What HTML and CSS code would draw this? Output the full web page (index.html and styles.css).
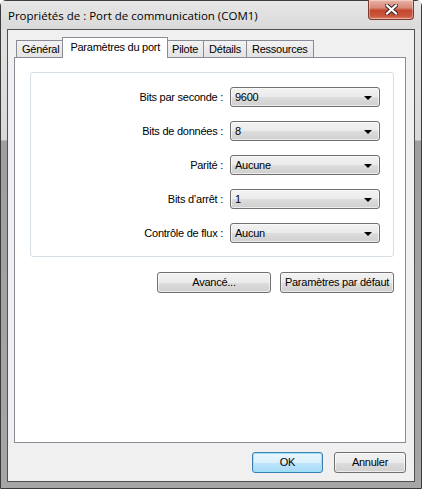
FILE: index.html
```html
<!DOCTYPE html>
<html lang="fr">
<head>
  <meta charset="UTF-8">
  <title>Propriétés de : Port de communication (COM1)</title>
  <link rel="stylesheet" href="styles.css">
</head>
<body>
  <div class="window">
    <div class="titlebar">
      <span class="title">Propriétés de : Port de communication (COM1)</span>
      <div class="close">
        <svg width="13" height="11" viewBox="0 0 13 11">
          <path d="M2 1.5 L11 9.5 M11 1.5 L2 9.5" stroke="#3b2b2b" stroke-width="4.2" stroke-linecap="square" fill="none"/>
          <path d="M2 1.5 L11 9.5 M11 1.5 L2 9.5" stroke="#ffffff" stroke-width="2.2" stroke-linecap="square" fill="none"/>
        </svg>
      </div>
    </div>

    <div class="client">
      <div class="tabs">
        <div class="tab">Général</div>
        <div class="tab active">Paramètres du port</div>
        <div class="tab">Pilote</div>
        <div class="tab">Détails</div>
        <div class="tab">Ressources</div>
      </div>

      <div class="panel">
        <div class="group">
          <label>Bits par seconde :</label>
          <div class="combo"><span>9600</span><i class="arrow"></i></div>

          <label>Bits de données :</label>
          <div class="combo"><span>8</span><i class="arrow"></i></div>

          <label>Parité :</label>
          <div class="combo"><span>Aucune</span><i class="arrow"></i></div>

          <label>Bits d’arrêt :</label>
          <div class="combo"><span>1</span><i class="arrow"></i></div>

          <label>Contrôle de flux :</label>
          <div class="combo"><span>Aucun</span><i class="arrow"></i></div>
        </div>

        <div class="actions">
          <div class="btn wide">Avancé...</div>
          <div class="btn wide">Paramètres par défaut</div>
        </div>
      </div>

      <div class="footer">
        <div class="btn default">OK</div>
        <div class="btn">Annuler</div>
      </div>
    </div>
  </div>
</body>
</html>
```

FILE: styles.css
```css
* {
  box-sizing: border-box;
}

body {
  margin: 0;
  background-color: #ffffff;
  font-family: "Liberation Sans", Arial, sans-serif;
  font-size: 11px;
  letter-spacing: -0.25px;
  color: #000000;
}

.window {
  width: 422px;
  height: 489px;
  display: flex;
  flex-direction: column;
  padding: 0 6px 6px 6px;
  border: 1px solid #3c3c3c;
  border-radius: 6px 6px 0 0;
  background: linear-gradient(to bottom, #e4e4e4 0, #d8d8d8 139px, #9f9f9f 140px, #a6a6a6 100%);
}

.titlebar {
  height: 28px;
  display: flex;
  align-items: flex-start;
  background: linear-gradient(to bottom, #e6e6e6, #dadada);
  margin: 0 -6px;
  padding: 0 1px 0 7px;
}

.title {
  font-family: "Open Sans", "Noto Sans", sans-serif;
  font-size: 11.5px;
  letter-spacing: 0;
  line-height: 16px;
  margin-top: 7px;
  color: #000000;
}

.close {
  margin-left: auto;
  margin-top: -1px;
  margin-right: 6px;
  width: 46px;
  height: 20px;
  display: flex;
  align-items: center;
  justify-content: center;
  border: 1px solid #7a3a32;
  border-top: none;
  border-radius: 0 0 4px 4px;
  background: linear-gradient(to bottom, #e9b3a5 0, #d88a78 40%, #c5472f 55%, #c9563c 85%, #e08a6e 100%);
  box-shadow: inset 0 0 0 1px rgba(255, 255, 255, 0.35);
}

.client {
  flex: 1;
  display: flex;
  flex-direction: column;
  border: 1px solid #505050;
  background-color: #f0f0f0;
  padding: 7px 8px 0 6px;
}

.tabs {
  height: 21px;
  display: flex;
  align-items: flex-end;
  padding-left: 2px;
  margin-bottom: -1px;
  position: relative;
  z-index: 1;
}

.tab {
  height: 17px;
  margin-bottom: 1px;
  margin-left: -1px;
  padding: 0 5px;
  line-height: 17px;
  border: 1px solid #898c95;
  border-bottom: none;
  background: linear-gradient(to bottom, #f2f2f2, #e3e3e3);
}

.tab:first-child {
  margin-left: 0;
}

.tab.active {
  height: 21px;
  margin: 0 -2px 0 -3px;
  padding: 0 7px;
  line-height: 18px;
  background: #ffffff;
  position: relative;
  z-index: 2;
}

.tab.active + .tab {
  margin-left: 0;
}

.panel {
  height: 386px;
  background-color: #ffffff;
  border: 1px solid #898c95;
  padding: 14px 11px 0 15px;
}

.group {
  height: 185px;
  display: grid;
  grid-template-columns: 194px 150px;
  grid-auto-rows: 20px;
  column-gap: 5px;
  row-gap: 14px;
  padding: 14px 0 0 0;
  border: 1px solid #d5dfe5;
  border-radius: 3px;
}

.group label {
  text-align: right;
  line-height: 20px;
  padding-right: 2px;
}

.combo {
  display: flex;
  align-items: center;
  padding: 0 4px 0 4px;
  border: 1px solid #707070;
  border-radius: 3px;
  background: linear-gradient(to bottom, #f2f2f2 0, #ebebeb 50%, #dddddd 51%, #cfcfcf 100%);
  box-shadow: inset 0 0 0 1px rgba(255, 255, 255, 0.6);
}

.combo span {
  flex: 1;
}

.arrow {
  width: 0;
  height: 0;
  margin-right: 3px;
  margin-top: 1px;
  border-left: 4px solid transparent;
  border-right: 4px solid transparent;
  border-top: 4px solid #000000;
}

.actions {
  display: flex;
  justify-content: flex-end;
  gap: 9px;
  margin-top: 15px;
}

.btn {
  width: 72px;
  height: 21px;
  line-height: 19px;
  text-align: center;
  border: 1px solid #707070;
  border-radius: 3px;
  background: linear-gradient(to bottom, #f2f2f2 0, #ebebeb 50%, #dddddd 51%, #cfcfcf 100%);
  box-shadow: inset 0 0 0 1px rgba(255, 255, 255, 0.6);
}

.btn.wide {
  width: 114px;
}

.btn.default {
  width: 71px;
  border-color: #3c7fb1;
  background: linear-gradient(to bottom, #eaf6fd 0, #d9f0fc 50%, #bee6fd 51%, #a7d9f5 100%);
  box-shadow: inset 0 0 0 1px #98e2f7;
}

.footer {
  flex: 1;
  display: flex;
  justify-content: flex-end;
  gap: 11px;
  padding: 9px 0 0 0;
}
```
